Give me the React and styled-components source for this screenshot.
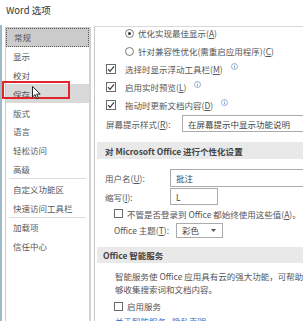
import React from "react";
import styled, { createGlobalStyle } from "styled-components";

const Global = createGlobalStyle`
  html, body { margin: 0; padding: 0; background: #fff; }
  body {
    width: 303px;
    height: 321px;
    overflow: hidden;
    font-family: "Noto Sans CJK SC", "Noto Sans", sans-serif;
  }
  u { text-underline-offset: 1px; }
`;

const Window = styled.div`
  position: relative;
  width: 303px;
  height: 321px;
  display: flex;
  flex-direction: column;
  background: #fff;
  color: #555;
  overflow: hidden;
`;

const TitleBar = styled.div`
  height: 25px;
  flex-shrink: 0;
  padding: 3px 0 0 6px;
  box-sizing: border-box;
  font-size: 9.5px;
  line-height: 14px;
  color: #333;
`;

const Body = styled.div`
  flex: 1;
  min-height: 0;
  display: flex;
  border-left: 2px solid #9dbcc8;
`;

const Nav = styled.ul`
  list-style: none;
  margin: 2px 0 0 3px;
  padding: 0;
  width: 86px;
  box-sizing: border-box;
  border: 1px solid #c9c9c9;
  border-right: 2px solid #d2d2d2;
  border-bottom: none;
  flex-shrink: 0;
`;

const NavItem = styled.li`
  height: 18.8px;
  box-sizing: border-box;
  display: flex;
  align-items: center;
  padding-left: 7px;
  font-size: 8.5px;
  color: #585858;
  background: ${({ $state }) =>
    $state === "selected" ? "#cbcbcb" : $state === "hover" ? "#d9d9d9" : "transparent"};
  border: ${({ $state }) => ($state === "selected" ? "1px dotted #5a5a5a" : "none")};
`;

const NavDivider = styled.li`
  height: 1px;
  margin: 0 3px;
  background: #dcdcdc;
`;

const Content = styled.div`
  flex: 1;
  min-width: 0;
  margin: 1px 0 0 3px;
  border-left: 1px solid #c8c8c8;
  border-top: 1px solid #d9d9d9;
  overflow: hidden;
`;

const Scroll = styled.div`
  margin-top: -3px;
  display: flex;
  flex-direction: column;
`;

const Row = styled.div`
  height: ${({ $h }) => $h}px;
  margin-top: ${({ $mt = 0 }) => $mt}px;
  padding-left: ${({ $indent }) => $indent}px;
  display: flex;
  align-items: center;
  gap: ${({ $gap = 4 }) => $gap}px;
  font-size: 8.5px;
  white-space: nowrap;
  flex-shrink: 0;
`;

const Radio = styled.span`
  width: 9px;
  height: 9px;
  box-sizing: border-box;
  border: 1px solid #7a7a7a;
  border-radius: 50%;
  display: flex;
  align-items: center;
  justify-content: center;
  background: #fff;
  &::after {
    content: "";
    width: 3px;
    height: 3px;
    border-radius: 50%;
    background: ${({ $on }) => ($on ? "#333" : "transparent")};
  }
`;

const Box = styled.span`
  width: ${({ $size = 10 }) => $size}px;
  height: ${({ $size = 10 }) => $size}px;
  box-sizing: border-box;
  border: 1px solid #6a6a6a;
  background: #fff;
  display: flex;
  align-items: center;
  justify-content: center;
  flex-shrink: 0;
`;

const Label = styled.span`
  width: ${({ $w }) => ($w ? `${$w}px` : "auto")};
  flex-shrink: 0;
`;

const Field = styled.div`
  width: ${({ $w }) => ($w ? `${$w}px` : "auto")};
  flex: ${({ $w }) => ($w ? "none" : "1")};
  height: ${({ $h = 17 }) => $h}px;
  box-sizing: border-box;
  border: 1px solid #ababab;
  border-right: ${({ $w }) => ($w ? "1px solid #ababab" : "none")};
  display: flex;
  align-items: center;
  justify-content: space-between;
  padding: 0 6px 0 5px;
  background: #fff;
  color: #444;
`;

const Section = styled.div`
  height: ${({ $h }) => $h}px;
  margin: ${({ $mt }) => $mt}px 0 0 2px;
  padding-left: ${({ $pl }) => $pl}px;
  display: flex;
  align-items: center;
  background: #e9e9e9;
  font-size: 8.5px;
  font-weight: 700;
  color: #444;
  white-space: nowrap;
  flex-shrink: 0;
`;

const Para = styled.div`
  margin-top: 7px;
  padding-left: 20px;
  font-size: 8.5px;
  line-height: 12.5px;
  white-space: nowrap;
`;

const Link = styled.div`
  padding-left: 20px;
  font-size: 8.5px;
  line-height: 12px;
  color: #2e6bc6;
  white-space: nowrap;
  word-spacing: 4px;
`;

const Info = styled.svg`
  margin: 0 0 5px -1px;
  flex-shrink: 0;
`;

const RedMark = styled.div`
  position: absolute;
  left: 2px;
  top: 81px;
  width: 68px;
  height: 18px;
  box-sizing: border-box;
  border: 2px solid #e0262b;
  pointer-events: none;
`;

const Pointer = styled.svg`
  position: absolute;
  left: 32px;
  top: 86px;
`;

const Check = () => (
  <svg width="8" height="8" viewBox="0 0 8 8">
    <path d="M1 4.2 L3 6.3 L7 1.3" fill="none" stroke="#333" strokeWidth="1.1" />
  </svg>
);

const InfoIcon = () => (
  <Info width="7" height="7" viewBox="0 0 7 7">
    <circle cx="3.5" cy="3.5" r="3" fill="none" stroke="#6b8fc0" strokeWidth="0.7" />
    <rect x="3.1" y="3" width="0.8" height="2.3" fill="#6b8fc0" />
    <rect x="3.1" y="1.6" width="0.8" height="0.8" fill="#6b8fc0" />
  </Info>
);

const navItems = [
  { t: "常规", s: "selected" },
  { t: "显示" },
  { t: "校对" },
  { t: "保存", s: "hover" },
  { t: "版式" },
  { t: "语言" },
  { t: "轻松访问" },
  { t: "高级" },
  { divider: true },
  { t: "自定义功能区" },
  { t: "快速访问工具栏" },
  { divider: true },
  { t: "加载项" },
  { t: "信任中心" },
];

export default function App() {
  return (
    <Window>
      <Global />
      <TitleBar>Word 选项</TitleBar>
      <Body>
        <Nav>
          {navItems.map((it, i) =>
            it.divider ? (
              <NavDivider key={i} />
            ) : (
              <NavItem key={i} $state={it.s}>
                {it.t}
              </NavItem>
            )
          )}
        </Nav>
        <Content>
          <Scroll>
            <Row $h={18} $indent={30} $gap={4}>
              <Radio $on />
              <span>
                优化实现最佳显示(<u>A</u>)
              </span>
            </Row>
            <Row $h={18} $indent={30} $gap={4}>
              <Radio />
              <span>
                针对兼容性优化(需重启应用程序)(<u>C</u>)
              </span>
            </Row>
            <Row $h={18} $indent={11} $gap={9}>
              <Box>
                <Check />
              </Box>
              <span>
                选择时显示浮动工具栏(<u>M</u>)
              </span>
              <InfoIcon />
            </Row>
            <Row $h={18} $indent={11} $gap={9}>
              <Box>
                <Check />
              </Box>
              <span>
                启用实时预览(<u>L</u>)
              </span>
              <InfoIcon />
            </Row>
            <Row $h={18} $indent={11} $gap={9}>
              <Box>
                <Check />
              </Box>
              <span>
                拖动时更新文档内容(<u>D</u>)
              </span>
              <InfoIcon />
            </Row>
            <Row $h={19} $indent={11} $gap={0}>
              <Label $w={76}>
                屏幕提示样式(<u>R</u>):
              </Label>
              <Field>在屏幕提示中显示功能说明</Field>
            </Row>
            <Section $h={17} $mt={9} $pl={8}>
              对 Microsoft Office 进行个性化设置
            </Section>
            <Row $h={19} $mt={9} $indent={10} $gap={0}>
              <Label $w={65}>
                用户名(<u>U</u>):
              </Label>
              <Field $h={18}>批注</Field>
            </Row>
            <Row $h={19} $indent={10} $gap={0}>
              <Label $w={65}>
                缩写(<u>I</u>):
              </Label>
              <Field $w={48} $h={17}>
                L
              </Field>
            </Row>
            <Row $h={15} $indent={19} $gap={4}>
              <Box $size={9} />
              <span>
                不管是否登录到 Office 都始终使用这些值(<u>A</u>)。
              </span>
            </Row>
            <Row $h={18} $indent={19} $gap={0}>
              <Label $w={62}>
                Office 主题(<u>T</u>):
              </Label>
              <Field $w={47} $h={15}>
                <span>彩色</span>
                <svg width="5" height="3" viewBox="0 0 5 3">
                  <path d="M0 0 L5 0 L2.5 3 Z" fill="#555" />
                </svg>
              </Field>
            </Row>
            <Section $h={16} $mt={8} $pl={6}>
              Office 智能服务
            </Section>
            <Para>
              智能服务使 Office 应用具有云的强大功能，可帮助节省时间
              <br />
              够收集搜索词和文档内容。
            </Para>
            <Row $h={18} $mt={2} $indent={19} $gap={4}>
              <Box $size={9} />
              <span>启用服务</span>
            </Row>
            <Link>关于智能服务 隐私声明</Link>
          </Scroll>
        </Content>
      </Body>
      <RedMark />
      <Pointer width="10" height="14" viewBox="0 0 10 14">
        <path
          d="M0.5 0.5 L0.5 11 L3 8.6 L4.8 12.8 L6.4 12.1 L4.7 8.1 L8.2 8.1 Z"
          fill="#fff"
          stroke="#111"
          strokeWidth="0.9"
          strokeLinejoin="round"
        />
      </Pointer>
    </Window>
  );
}
